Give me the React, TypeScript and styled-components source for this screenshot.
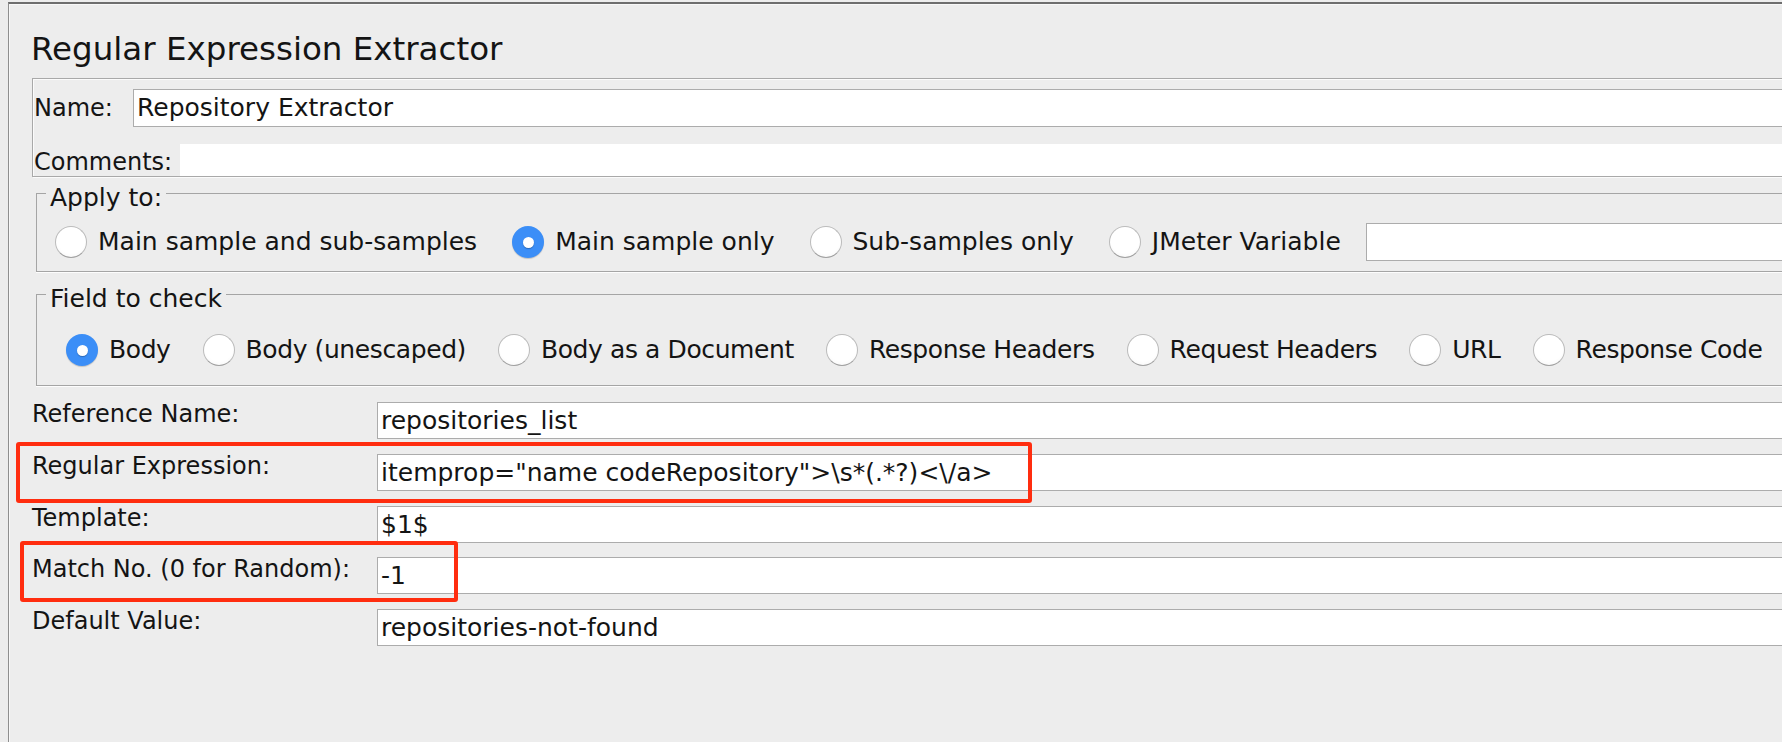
import React from 'react';
import styled, { createGlobalStyle } from 'styled-components';

const GlobalStyle = createGlobalStyle`
  html, body { margin: 0; padding: 0; background: #ededed; overflow: hidden; }
  body { font-family: "DejaVu Sans", "Lucida Grande", sans-serif; color: #141414; }
  * { box-sizing: border-box; }
`;

const Frame = styled.main`
  position: relative;
  margin: 2px 0 0 8px;
  width: 1860px;
  height: 740px;
  border-top: 2px solid #6e6e6e;
  border-left: 1px solid #8f8f8f;
  box-shadow: inset 1px 1px 0 #f8f8f8;
  padding: 26px 0 0 23px;
  display: flex;
  flex-direction: column;
`;

const Title = styled.h1`
  margin: 0 0 0 -1px;
  font-size: 32.5px;
  line-height: 38px;
  height: 38px;
  font-weight: normal;
`;

const NamePanel = styled.section`
  margin-top: 10px;
  border: 1px solid #a9a9a9;
  box-shadow: inset 1px 1px 0 #fbfbfb, 1px 1px 0 #fbfbfb;
  padding: 10px 0 0 1px;
  display: flex;
  flex-direction: column;
  gap: 17px;
`;

const PanelRow = styled.div<{ $h: number }>`
  display: flex;
  align-items: flex-end;
  height: ${(p) => p.$h}px;
`;

const PanelLabel = styled.span<{ $w: number }>`
  flex: 0 0 ${(p) => p.$w}px;
  font-size: 24px;
  line-height: 28px;
  align-self: center;
`;

const CommentsLabel = styled(PanelLabel)`
  align-self: flex-end;
`;

const TextField = styled.div<{ $h?: number }>`
  flex: 1;
  height: ${(p) => p.$h ?? 37}px;
  background: #fff;
  border: 1px solid #acacac;
  font-size: 25px;
  line-height: ${(p) => (p.$h ?? 37) - 2}px;
  padding: 0 3px;
  white-space: pre;
  overflow: hidden;
`;

const CommentsArea = styled.div`
  flex: 1;
  height: 32px;
  background: #fff;
`;

const Group = styled.fieldset<{ $top: number; $pt: number; $pb: number }>`
  margin: ${(p) => p.$top}px 0 0 4px;
  padding: ${(p) => `${p.$pt}px 0 ${p.$pb}px 0`};
  border: 1px solid #a5a5a5;
  box-shadow: 0 1px 0 #fdfdfd;
  min-width: 0;
`;

const GroupTitle = styled.legend`
  margin-left: 9px;
  padding: 10px 4px 0;
  font-size: 25px;
  line-height: 28px;
`;

const OptionRow = styled.div<{ $pl: number; $space: number; $ls: number }>`
  display: flex;
  align-items: center;
  height: 38px;
  padding-left: ${(p) => p.$pl}px;
  --space: ${(p) => p.$space}px;
  letter-spacing: ${(p) => p.$ls}px;
`;

const Option = styled.label<{ $after?: number }>`
  display: inline-flex;
  align-items: center;
  gap: 11px;
  font-size: 25px;
  line-height: 30px;
  margin-right: ${(p) => (p.$after !== undefined ? `${p.$after}px` : 'var(--space)')};
  white-space: nowrap;
`;

const Radio = styled.span<{ $on?: boolean }>`
  flex: 0 0 32px;
  width: 32px;
  height: 32px;
  border-radius: 50%;
  display: flex;
  align-items: center;
  justify-content: center;
  ${(p) =>
    p.$on
      ? `
    background: #3b8ef7;
    box-shadow: 0 1px 1px rgba(0,0,0,0.18);
    &::after {
      content: '';
      width: 11px;
      height: 11px;
      border-radius: 50%;
      background: #fff;
      box-shadow: 0 1px 1px rgba(0,0,0,0.25);
    }
  `
      : `
    background: radial-gradient(circle at 50% 40%, #ffffff 60%, #f3f3f3 100%);
    border: 1px solid #bcbcbc;
    border-bottom-color: #a0a0a0;
  `}
`;

const FieldGrid = styled.div`
  margin-top: 16px;
  display: grid;
  grid-template-columns: 345px 1fr;
  grid-auto-rows: 37px;
  row-gap: 14.75px;
`;

const FieldLabel = styled.span`
  font-size: 24px;
  line-height: 28px;
  margin-top: -2px;
`;

const Annotation = styled.div<{ $x: number; $y: number; $w: number; $h: number }>`
  position: absolute;
  left: ${(p) => p.$x}px;
  top: ${(p) => p.$y}px;
  width: ${(p) => p.$w}px;
  height: ${(p) => p.$h}px;
  border: 4px solid #ff2d0f;
  border-radius: 3px;
  pointer-events: none;
`;

const applyOptions = [
  { label: 'Main sample and sub-samples', on: false },
  { label: 'Main sample only', on: true },
  { label: 'Sub-samples only', on: false },
];

const fieldOptions = [
  { label: 'Body', on: true },
  { label: 'Body (unescaped)', on: false },
  { label: 'Body as a Document', on: false },
  { label: 'Response Headers', on: false },
  { label: 'Request Headers', on: false },
  { label: 'URL', on: false },
  { label: 'Response Code', on: false },
];

const fields = [
  { label: 'Reference Name:', value: 'repositories_list' },
  { label: 'Regular Expression:', value: 'itemprop="name codeRepository">\\s*(.*?)<\\/a>' },
  { label: 'Template:', value: '$1$' },
  { label: 'Match No. (0 for Random):', value: '-1' },
  { label: 'Default Value:', value: 'repositories-not-found' },
];

export default function App() {
  return (
    <>
      <GlobalStyle />
      <Frame>
        <Title>Regular Expression Extractor</Title>
        <NamePanel>
          <PanelRow $h={38}>
            <PanelLabel $w={99}>Name:</PanelLabel>
            <TextField $h={38}>Repository Extractor</TextField>
          </PanelRow>
          <PanelRow $h={32}>
            <CommentsLabel $w={146}>Comments:</CommentsLabel>
            <CommentsArea />
          </PanelRow>
        </NamePanel>

        <Group $top={-3} $pt={11} $pb={10}>
          <GroupTitle>Apply to:</GroupTitle>
          <OptionRow $pl={18} $space={35} $ls={0}>
            {applyOptions.map((o) => (
              <Option key={o.label}>
                <Radio $on={o.on} />
                {o.label}
              </Option>
            ))}
            <Option $after={25}>
              <Radio />
              JMeter Variable
            </Option>
            <TextField $h={38} />
          </OptionRow>
        </Group>

        <Group $top={3} $pt={18} $pb={16}>
          <GroupTitle>Field to check</GroupTitle>
          <OptionRow $pl={29} $space={32} $ls={-0.4}>
            {fieldOptions.map((o) => (
              <Option key={o.label}>
                <Radio $on={o.on} />
                {o.label}
              </Option>
            ))}
          </OptionRow>
        </Group>

        <FieldGrid>
          {fields.map((f) => (
            <React.Fragment key={f.label}>
              <FieldLabel>{f.label}</FieldLabel>
              <TextField>{f.value}</TextField>
            </React.Fragment>
          ))}
        </FieldGrid>

        <Annotation $x={7} $y={438} $w={1016} $h={61} />
        <Annotation $x={11} $y={537} $w={438} $h={61} />
      </Frame>
    </>
  );
}
